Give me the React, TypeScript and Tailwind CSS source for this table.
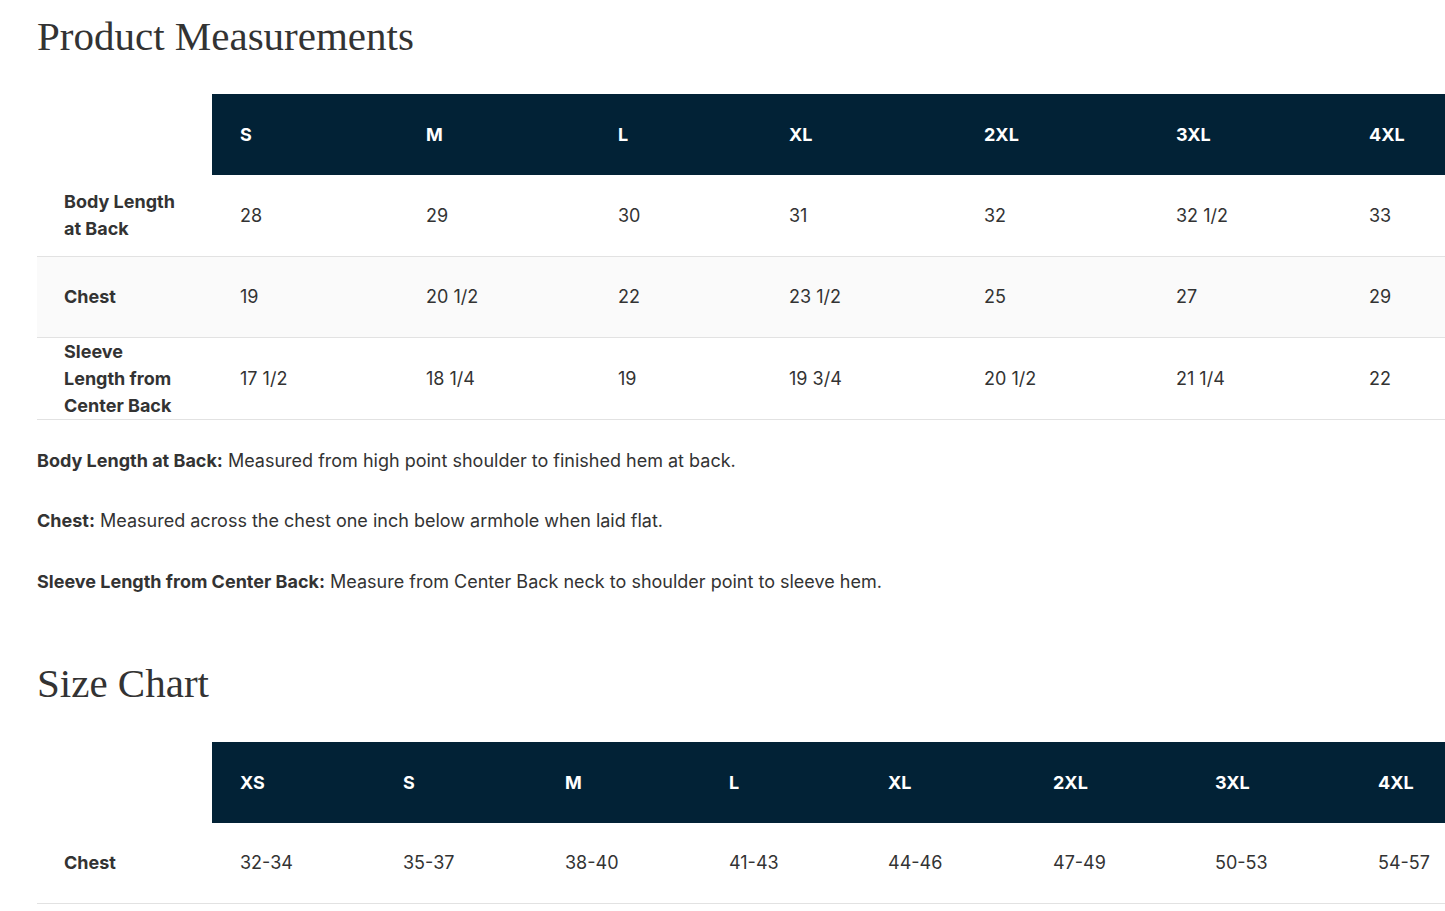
const measureSizes = ["S", "M", "L", "XL", "2XL", "3XL", "4XL"];
const measureCols = [175, 186, 192, 171, 195, 192, 193, 172];

const measureRows = [
  { label: "Body Length at Back", values: ["28", "29", "30", "31", "32", "32 1/2", "33"] },
  { label: "Chest", values: ["19", "20 1/2", "22", "23 1/2", "25", "27", "29"] },
  { label: "Sleeve Length from Center Back", values: ["17 1/2", "18 1/4", "19", "19 3/4", "20 1/2", "21 1/4", "22"] },
];

const chartSizes = ["XS", "S", "M", "L", "XL", "2XL", "3XL", "4XL"];
const chartCols = [175, 163, 162, 164, 159, 165, 162, 163, 163];
const chartRows = [
  { label: "Chest", values: ["32-34", "35-37", "38-40", "41-43", "44-46", "47-49", "50-53", "54-57"] },
];

const notes = [
  { term: "Body Length at Back:", text: "Measured from high point shoulder to finished hem at back." },
  { term: "Chest:", text: "Measured across the chest one inch below armhole when laid flat." },
  { term: "Sleeve Length from Center Back:", text: "Measure from Center Back neck to shoulder point to sleeve hem." },
];

type Row = { label: string; values: string[] };

function SizeTable({ sizes, cols, rows }: { sizes: string[]; cols: number[]; rows: Row[] }) {
  return (
    <table className="table-fixed border-collapse w-[1476px]">
      <colgroup>
        {cols.map((w, i) => (
          <col key={i} style={{ width: w }} />
        ))}
      </colgroup>
      <thead>
        <tr className="h-[81px]">
          <th className="bg-white"></th>
          {sizes.map((s) => (
            <th key={s} className="bg-[#022236] text-white text-left font-bold pl-7 align-middle">
              {s}
            </th>
          ))}
        </tr>
      </thead>
      <tbody>
        {rows.map((r, i) => (
          <tr key={r.label} className={`h-[81px] border-b border-[#e2e2e2] ${i % 2 === 1 ? "bg-[#fafafa]" : "bg-white"}`}>
            <th className="text-left font-bold pl-[27px] pr-[30px] leading-[27px] align-middle">{r.label}</th>
            {r.values.map((v, j) => (
              <td key={j} className="pl-7 align-middle">
                {v}
              </td>
            ))}
          </tr>
        ))}
      </tbody>
    </table>
  );
}

export default function App() {
  return (
    <div className="w-full overflow-hidden bg-white text-[#333333] text-[18px] font-['Inter',sans-serif]">
      <div className="pl-[37px] pt-[11px] pb-10">
        <h2 className="text-[41px] leading-[50px] font-['Liberation_Serif',serif] text-[#333333] mb-[33px]">
          Product Measurements
        </h2>
        <SizeTable sizes={measureSizes} cols={measureCols} rows={measureRows} />
        <div className="mt-[27px] flex flex-col gap-[33.5px]">
          {notes.map((n) => (
            <p key={n.term} className="leading-[27px]">
              <span className="font-bold">{n.term}</span> {n.text}
            </p>
          ))}
        </div>
        <h2 className="mt-[63px] text-[41px] leading-[50px] font-['Liberation_Serif',serif] text-[#333333] mb-[34px]">
          Size Chart
        </h2>
        <SizeTable sizes={chartSizes} cols={chartCols} rows={chartRows} />
      </div>
    </div>
  );
}
